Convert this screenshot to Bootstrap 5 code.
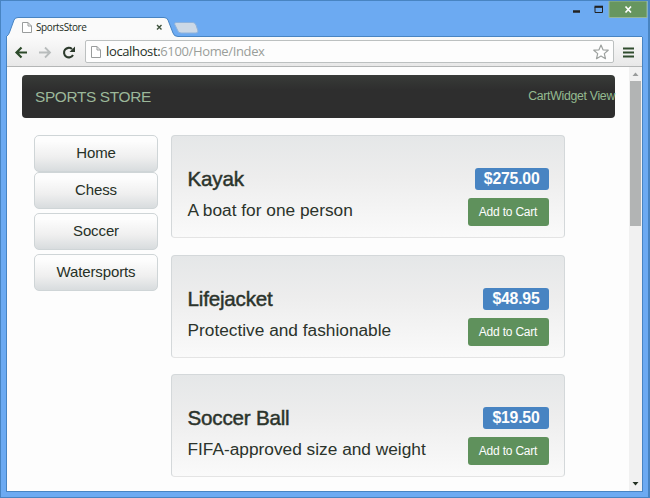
<!DOCTYPE html>
<html lang="en">
<head>
<meta charset="utf-8">
<meta name="viewport" content="width=device-width, initial-scale=1">
<title>SportsStore</title>
<link href="https://cdn.jsdelivr.net/npm/bootstrap@5.3.0/dist/css/bootstrap.min.css" rel="stylesheet">
<style>
body{font-family:"Liberation Sans",Arial,sans-serif;background:#6caaf2;color:#2b332b;line-height:1}
svg{display:block;flex:none}
.win{width:650px;height:498px;border:1px solid #4884c2;border-right-width:2px;padding:0 5px 5px;background:#6caaf2}
.title-bar{height:36px;position:relative}
.tab-shape,.win-buttons{position:absolute;top:0;left:0}
.tab-label{position:absolute;left:30px;top:20px;font:10px/12px "Open Sans",sans-serif;color:#222c22;letter-spacing:-.4px}
.client{height:455px;border:1px solid #4884c2;border-top:0;background:#fdfdfd}
.tool-bar{height:30px;background:linear-gradient(#fafafa,#e8e8e8);border-bottom:1px solid #b4b6b6}
.address{width:531px;height:23px;border:1px solid #bcc0c0;border-radius:2px;margin-left:7px;background:#fdfdfd;font:13px/21px "Open Sans",sans-serif;color:#9a9e9a}
.address b{font-weight:400;color:#263026}
.url-text{letter-spacing:-.36px}
.body-row{height:424px}
.page{padding:8px 0 0 15px;width:623px}
.store-bar{width:593px;height:43px;border-radius:4px;background:linear-gradient(#383b38,#2e2e2e 35%);color:#94ba90;padding-left:13px}
.brand-name{font-size:15.4px;letter-spacing:-.35px;color:#9cb89a}
.cart-view{font-size:12.3px;letter-spacing:-.3px}
.side,.items{padding-top:17px}
.side{width:124px;margin-left:12px}
.side .btn{height:37px;padding:0;font-size:15px;letter-spacing:-.12px;border:1px solid #cfd5d7;border-radius:5px;background:linear-gradient(#fdfdfd 15%,#efefef 60%,#d8dcde);color:#263026;margin-bottom:4px}
.side .btn:first-child{margin-bottom:0}
.items{width:394px;margin-left:13px}
.product{height:103px;border:1px solid #d4d8da;border-bottom-color:#e4e4e4;border-radius:4px;background:linear-gradient(#e5e7e8,#ededed 40%,#fafafa);margin-bottom:16.5px;padding:32px 15.5px 0}
.product:last-child{margin-bottom:0}
.product h3{font-size:20.6px;letter-spacing:-.2px;font-weight:400;line-height:22px;margin:0;-webkit-text-stroke:.45px #2b332b}
.product p{font-size:17.3px;line-height:20px;margin:0 0 4px}
.price{height:22px;background:#4884c2;border-radius:3px;color:#fdfdfd;font-size:15.8px;letter-spacing:-.2px;font-weight:700;line-height:22px;padding:0 9px}
.add{width:81px;height:28px;background:#5f915c;border-radius:3px;color:#fdfdfd;font-size:12px;letter-spacing:-.2px;padding:0;border:0}
.scroll-track{width:13px;background:#f1f1f1}
.thumb{width:11px;height:145px;background:#b2b4b4}
</style>
<script src="https://cdn.jsdelivr.net/npm/bootstrap@5.3.0/dist/js/bootstrap.bundle.min.js"></script>
</head>
<body class="overflow-hidden">
<div class="win">
  <div class="title-bar">
    <svg class="tab-shape" width="636" height="36" viewBox="6 1 636 36">
      <path d="M6 37Q9 35 10 31L14 20Q15 17.500 18 17.500H164Q167 17.500 168 20L173 33Q174 36.500 178 36.500H642V38H6Z" fill="#fafafa" stroke="#4884c2"/>
      <path d="M176 22.500H193Q195 22.500 196 25L198 31Q198 33 196 33H181Q178 33 177.500 30L174.500 24Q174.500 22.500 176 22.500Z" fill="#ccd8e6" stroke="#8eb2dc"/>
      <path d="M22.500 22.500H28L31.500 26V32.500H22.500ZM28 22.500V26H31.500" fill="#fff" stroke="#999c9c"/>
      <path d="M157 25L161.500 29.500M161.500 25L157 29.500" stroke="#3e523c" stroke-width="1.400"/>
    </svg>
    <svg class="win-buttons" width="644" height="20" viewBox="6 1 644 20">
      <path d="M573 11.500H580" stroke="#222" stroke-width="2.500"/>
      <path d="M595 7H602.500V12.500H595Z" fill="none" stroke="#222"/><path d="M594.500 6.700H603" stroke="#222" stroke-width="2"/>
      <path d="M609 1H647V17.500H609Z" fill="#67965f" stroke="#96b698"/>
      <path d="M625.500 6.500L631 12.500M631 6.500L625.500 12.500" stroke="#fff" stroke-width="1.700"/>
    </svg>
    <span class="tab-label">SportsStore</span>
  </div>
  <div class="client">
    <div class="tool-bar d-flex align-items-center">
      <svg width="71" height="28" viewBox="7 37 71 28" fill="none">
        <path d="M27 51.500H16.500M21.500 46.500L16.500 51.500L21.500 56.500" stroke="#2c4a2a" stroke-width="2.200"/>
        <path d="M39 51.500H49.500M45 46.500L50 51.500L45 56.500" stroke="#b8bcbc" stroke-width="1.800"/>
        <path d="M73 54A4.800 4.800 0 1 1 72 48" stroke="#2c3a2c" stroke-width="2.100"/><path d="M75 45.500V51H69.500Z" fill="#2c3a2c"/>
      </svg>
      <div class="address d-flex align-items-center">
        <svg class="ms-1" width="16" height="19" viewBox="89 42 16 19"><path d="M90.500 46.500H96L99.500 50V57.500H90.500ZM96 46.500V50H99.500" fill="#fff" stroke="#999c9c"/></svg>
        <span class="url-text"><b>localhost:</b>6100/Home/Index</span>
        <svg class="ms-auto me-1" width="16" height="16" viewBox="0 0 16 16"><path d="M8 1L10 5.800L15.200 6.200L11.300 9.600L12.500 14.700L8 12L3.500 14.700L4.700 9.600L.8 6.200L6 5.800Z" fill="#fff" stroke="#9da19f" stroke-width="1.200" stroke-linejoin="round"/></svg>
      </div>
      <svg class="ms-auto" width="28" height="28" viewBox="615 37 28 28"><path d="M624 47.500H635M624 51.500H635M624 55.500H635" stroke="#304c2e" stroke-width="2"/></svg>
    </div>
    <div class="body-row d-flex">
      <main class="page">
        <nav class="store-bar d-flex align-items-center justify-content-between">
          <span class="brand-name">SPORTS STORE</span><span class="cart-view text-nowrap">CartWidget View</span>
        </nav>
        <div class="d-flex">
          <div class="side d-flex flex-column">
            <a class="btn d-flex align-items-center justify-content-center">Home</a>
            <a class="btn d-flex align-items-center justify-content-center">Chess</a>
            <a class="btn d-flex align-items-center justify-content-center">Soccer</a>
            <a class="btn d-flex align-items-center justify-content-center">Watersports</a>
          </div>
          <div class="items">
            <section class="product">
              <div class="d-flex justify-content-between"><h3>Kayak</h3><span class="price">$275.00</span></div>
              <div class="d-flex justify-content-between align-items-center pt-2"><p>A boat for one person</p><button class="btn add">Add to Cart</button></div>
            </section>
            <section class="product">
              <div class="d-flex justify-content-between"><h3>Lifejacket</h3><span class="price">$48.95</span></div>
              <div class="d-flex justify-content-between align-items-center pt-2"><p>Protective and fashionable</p><button class="btn add">Add to Cart</button></div>
            </section>
            <section class="product">
              <div class="d-flex justify-content-between"><h3>Soccer Ball</h3><span class="price">$19.50</span></div>
              <div class="d-flex justify-content-between align-items-center pt-2"><p>FIFA-approved size and weight</p><button class="btn add">Add to Cart</button></div>
            </section>
          </div>
        </div>
      </main>
      <div class="scroll-track d-flex flex-column align-items-center">
        <svg width="13" height="14" viewBox="0 0 13 14"><path d="M3.500 9L6.500 5.500L9.500 9Z" fill="#999c9c"/></svg>
        <div class="thumb"></div>
        <svg class="mt-auto" width="13" height="14" viewBox="0 0 13 14"><path d="M3.500 5L6.500 8.500L9.500 5Z" fill="#223022"/></svg>
      </div>
    </div>
  </div>
</div>
</body>
</html>
